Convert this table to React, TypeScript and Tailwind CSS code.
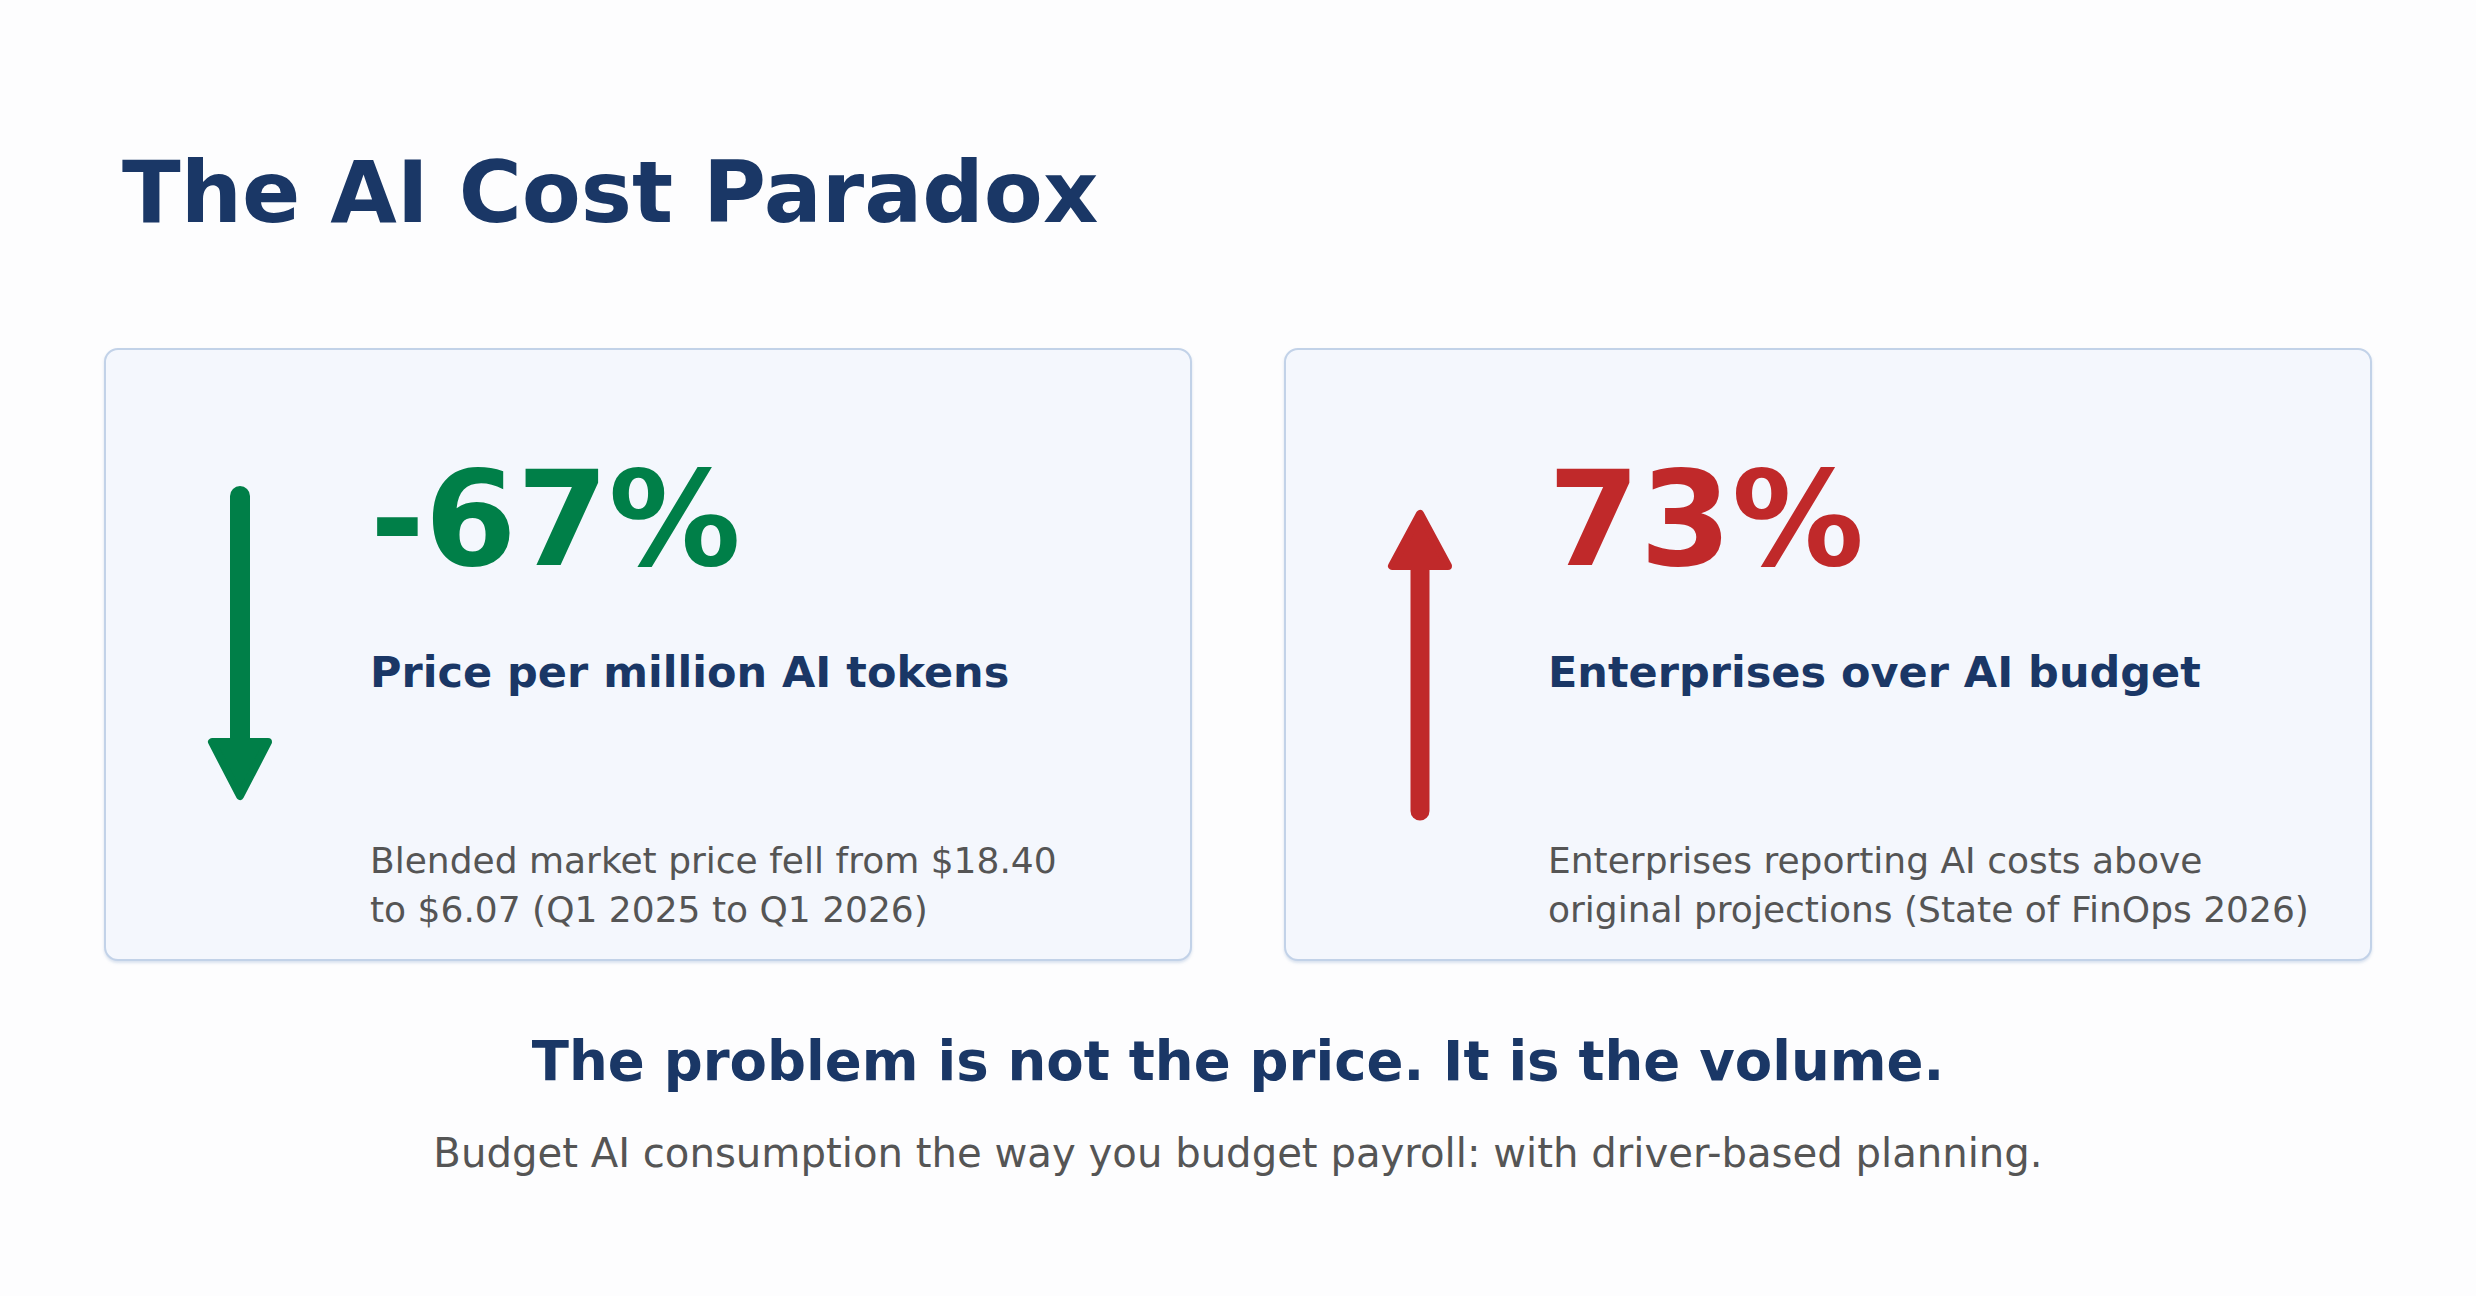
import React, { type FC } from 'react';

type StatCardProps = {
  value: string;
  valueClass: string;
  label: string;
  lines: string[];
  direction: 'up' | 'down';
  gutterClass: string;
};

const ArrowGlyph: FC<{ direction: 'up' | 'down' }> = ({ direction }) => {
  if (direction === 'down') {
    return (
      <svg width="266" height="608" viewBox="0 0 266 608" className="block">
        <line x1="134" y1="146" x2="134" y2="392" stroke="#007f48" strokeWidth="20" strokeLinecap="round" />
        <polygon
          points="106,392 162,392 134,446"
          fill="#007f48"
          stroke="#007f48"
          strokeWidth="8"
          strokeLinejoin="round"
        />
      </svg>
    );
  }
  return (
    <svg width="262" height="608" viewBox="0 0 262 608" className="block">
      <line x1="134" y1="216" x2="134" y2="461" stroke="#c0292a" strokeWidth="19" strokeLinecap="round" />
      <polygon
        points="106,216 162,216 134,164"
        fill="#c0292a"
        stroke="#c0292a"
        strokeWidth="8"
        strokeLinejoin="round"
      />
    </svg>
  );
};

const StatCard: FC<StatCardProps> = ({ value, valueClass, label, lines, direction, gutterClass }) => (
  <div className="flex h-[613px] w-[1088px] overflow-hidden rounded-[14px] border-2 border-[#c2d2e8] bg-[#f4f7fd] shadow-[0_2px_3px_rgba(150,175,210,0.35)]">
    <div className={`shrink-0 ${gutterClass}`}>
      <ArrowGlyph direction={direction} />
    </div>
    <div className="flex flex-col pt-[103px]">
      <div className={`text-[132px] font-bold leading-none ${valueClass}`}>{value}</div>
      <div className="mt-[66px] text-[43px] font-bold leading-none text-[#1a3766]">{label}</div>
      <div className="mt-[142px] text-[36px] leading-[49px] text-[#555555]">
        {lines.map((line) => (
          <div key={line}>{line}</div>
        ))}
      </div>
    </div>
  </div>
);

const App: FC = () => (
  <div
    className="flex h-[1296px] w-full flex-col bg-[#fdfdfe] px-[104px]"
    style={{ fontFamily: '"DejaVu Sans", "Noto Sans", sans-serif' }}
  >
    <h1 className="ml-[18px] mt-[149px] text-[86px] font-bold leading-none text-[#1a3766]">
      The AI Cost Paradox
    </h1>
    <div className="mt-[113px] flex gap-[92px]">
      <StatCard
        value="-67%"
        valueClass="text-[#007f48]"
        label="Price per million AI tokens"
        lines={['Blended market price fell from $18.40', 'to $6.07 (Q1 2025 to Q1 2026)']}
        direction="down"
        gutterClass="w-[264px]"
      />
      <StatCard
        value="73%"
        valueClass="text-[#c0292a]"
        label="Enterprises over AI budget"
        lines={['Enterprises reporting AI costs above', 'original projections (State of FinOps 2026)']}
        direction="up"
        gutterClass="w-[262px]"
      />
    </div>
    <p className="mt-[73px] text-center text-[54.5px] font-bold leading-none text-[#1a3766]">
      The problem is not the price. It is the volume.
    </p>
    <p className="mt-[44px] text-center text-[40.2px] leading-none text-[#555555]">
      Budget AI consumption the way you budget payroll: with driver-based planning.
    </p>
  </div>
);

export default App;
